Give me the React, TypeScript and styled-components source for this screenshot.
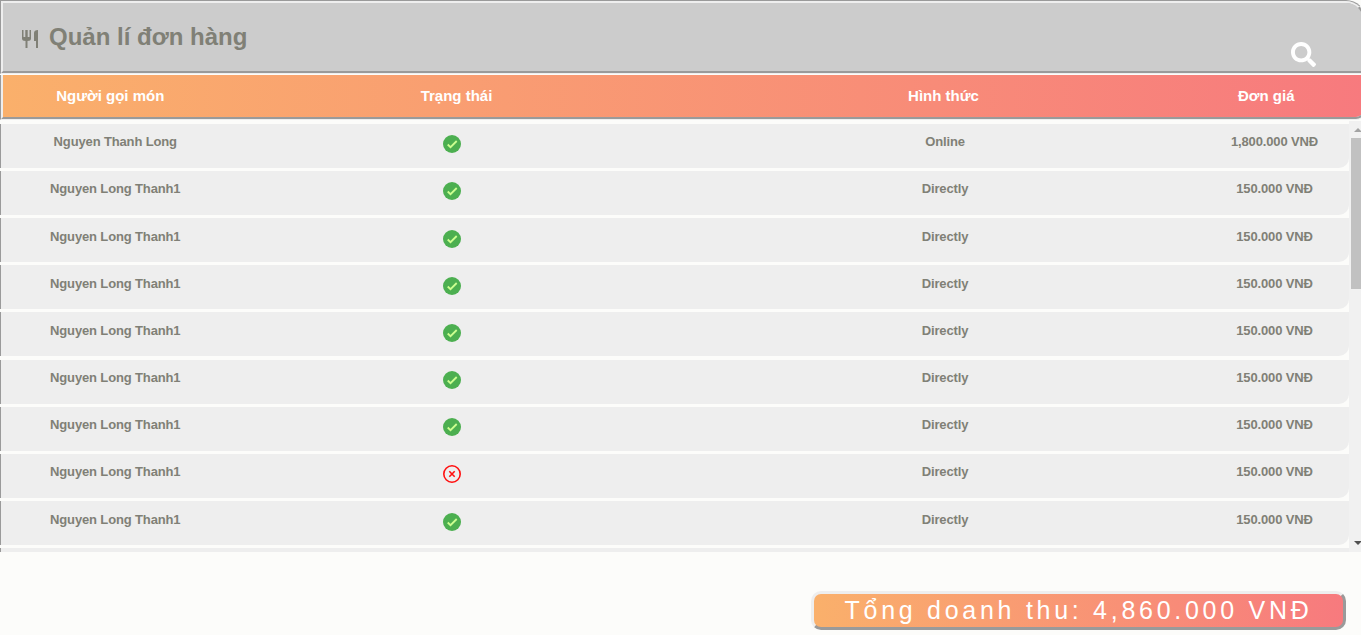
import React from 'react';
import styled, { createGlobalStyle } from 'styled-components';

const Global = createGlobalStyle`
  * { box-sizing: border-box; }
  html, body { margin: 0; height: 100%; overflow: hidden; }
  body { background: #fcfcfa; color: #808076; font-family: "Liberation Sans", Arial, sans-serif; }
`;

const Page = styled.main`
  width: 1366px;
  height: 635px;
  display: flex;
  flex-direction: column;
`;

const TitleBar = styled.header`
  height: 74px;
  flex: none;
  display: flex;
  justify-content: space-between;
  padding: 0 47px 0 18px;
  background: #ccc;
  border: 3px groove #eee;
  border-top-right-radius: 20px;
`;

const Title = styled.h1`
  display: flex;
  margin: 20px 0 0;
  font-size: 24px;
  line-height: 28px;
  gap: 10px;
  svg { margin-top: 6px; }
`;

const SearchButton = styled.button`
  align-self: flex-start;
  margin: 39px 0 0;
  padding: 0;
  border: 0;
  background: none;
  color: #fff;
  line-height: 0;
`;

const HeadRow = styled.div`
  height: 45px;
  flex: none;
  margin-top: 1px;
  display: grid;
  grid-template-columns: 214.500px 478px 496px 149.500px;
  border: 3px groove #eee;
  border-top: 0;
  border-bottom-right-radius: 10px;
  background: linear-gradient(to right, #fab06b, #f77a7e);
  background-origin: border-box;
  color: #fff;
  font-size: 15px;
  font-weight: bold;
  line-height: 42px;
  text-align: center;
`;

const ListFrame = styled.section`
  height: 431px;
  flex: none;
  margin-top: 1px;
  display: flex;
  overflow: hidden;
`;

const List = styled.div`
  width: 1349px;
  height: 431px;
  padding-top: 2.8px;
  overflow: hidden;
`;

const Row = styled.div`
  height: 44px;
  margin-bottom: 3.16px;
  display: grid;
  grid-template-columns: 228.500px 453.500px 524px 135px;
  background: #eee;
  border-left: 1px solid #9a9a9a;
  border-bottom-right-radius: 10px;
  font-size: 13px;
  font-weight: bold;
  line-height: 15px;
  letter-spacing: -0.14px;
  text-align: center;
`;

const Cell = styled.div`
  padding-top: 10.52px;
`;

const StatusCell = styled.div`
  padding: 11.52px 0 0 213px;
  svg { display: block; }
`;

const Scrollbar = styled.div`
  width: 17px;
  display: flex;
  flex-direction: column;
  align-items: center;
  background: #f1f1f1;
`;

const Arrow = styled.div<{ $down?: boolean }>`
  width: 17px;
  height: ${p => (p.$down ? 19 : 17)}px;
  flex: none;
  display: flex;
  align-items: center;
  justify-content: center;
  color: ${p => (p.$down ? '#505050' : '#a3a3a3')};
  svg { transform: ${p => (p.$down ? 'rotate(180deg)' : 'none')}; }
`;

const Thumb = styled.div`
  width: 13px;
  height: 151px;
  margin-bottom: auto;
  background: #c1c1c1;
`;

const Total = styled.div`
  align-self: flex-end;
  width: 535px;
  height: 39px;
  margin: 39px 20px 0 0;
  border: 3px outset #eee;
  border-radius: 10px;
  background: linear-gradient(to right, #fab06b, #f77a7e);
  color: #fff;
  font-size: 25px;
  letter-spacing: 3.72px;
  line-height: 33px;
  text-align: center;
  white-space: nowrap;
`;

const Utensils = () => (
  <svg width="18" height="20" viewBox="0 0 18 20" fill="currentColor">
    <path d="M1 1h1.500v7h1.800V1h2.400v7h1.800V1h1.500v8.500Q10 12 6.500 12v7h-2v-7Q1 12 1 9.500z" />
    <path d="M17 1v18h-2v-7h-2V4q0-3 4-3z" />
  </svg>
);

const Check = () => (
  <svg width="18" height="18" viewBox="0 0 18 18">
    <circle cx="9" cy="9" r="9" fill="#4caf50" />
    <path d="M4.700 9.500L7.500 12.200L13.700 6" fill="none" stroke="#ccff90" strokeWidth="1.800" />
  </svg>
);

const Cross = () => (
  <svg width="18" height="18" viewBox="0 0 18 18" fill="none" stroke="#ff1010">
    <circle cx="9" cy="9" r="8.200" strokeWidth="1.600" />
    <path d="M6.300 6.300l5.400 5.400M11.700 6.300l-5.400 5.400" strokeWidth="1.600" />
  </svg>
);

const Triangle = () => (
  <svg width="8" height="4" viewBox="0 0 8 4" fill="currentColor"><path d="M4 0l4 4H0z" /></svg>
);

type Order = { name: string; paid: boolean; kind: string; price: string };
const direct = (paid = true): Order => ({ name: 'Nguyen Long Thanh1', paid, kind: 'Directly', price: '150.000 VNĐ' });
const orders: Order[] = [
  { name: 'Nguyen Thanh Long', paid: true, kind: 'Online', price: '1,800.000 VNĐ' },
  direct(), direct(), direct(), direct(), direct(), direct(), direct(false), direct(),
];

export default function App() {
  return (
    <Page>
      <Global />
      <TitleBar>
        <Title><Utensils />Quản lí đơn hàng</Title>
        <SearchButton aria-label="Tìm kiếm">
          <svg width="25" height="25" viewBox="0 0 512 512" fill="currentColor">
            <path d="M505 442.700L405.300 343c-4.500-4.500-10.600-7-17-7H372c27.600-35.300 44-79.700 44-128C416 93.100 322.900 0 208 0S0 93.100 0 208s93.100 208 208 208c48.300 0 92.700-16.400 128-44v16.300c0 6.400 2.500 12.500 7 17l99.700 99.700c9.400 9.400 24.600 9.400 33.900 0l28.300-28.300c9.400-9.400 9.400-24.600.1-34zM208 336c-70.700 0-128-57.200-128-128 0-70.700 57.200-128 128-128 70.700 0 128 57.200 128 128 0 70.700-57.200 128-128 128z" />
          </svg>
        </SearchButton>
      </TitleBar>
      <HeadRow>
        <span>Người gọi món</span>
        <span>Trạng thái</span>
        <span>Hình thức</span>
        <span>Đơn giá</span>
      </HeadRow>
      <ListFrame>
        <List>
          {orders.map((o, i) => (
            <Row key={i}>
              <Cell>{o.name}</Cell>
              <StatusCell>{o.paid ? <Check /> : <Cross />}</StatusCell>
              <Cell>{o.kind}</Cell>
              <Cell>{o.price}</Cell>
            </Row>
          ))}
          <Row />
        </List>
        <Scrollbar>
          <Arrow><Triangle /></Arrow>
          <Thumb />
          <Arrow $down><Triangle /></Arrow>
        </Scrollbar>
      </ListFrame>
      <Total>Tổng doanh thu: 4,860.000 VNĐ</Total>
    </Page>
  );
}
